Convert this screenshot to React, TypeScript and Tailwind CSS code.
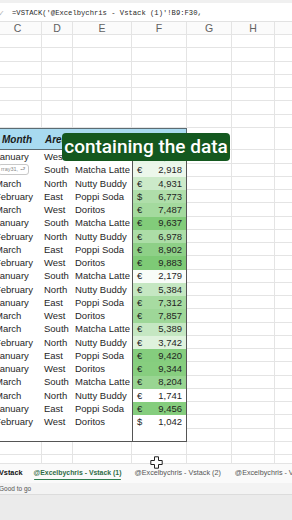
import React from 'react';

type Row = { month: string; area: string; product: string; cur: string; value: number };

const rows: Row[] = [
  { month: 'January', area: 'West', product: 'Doritos', cur: '€', value: 3105 },
  { month: 'March', area: 'South', product: 'Matcha Latte', cur: '€', value: 2918 },
  { month: 'March', area: 'North', product: 'Nutty Buddy', cur: '€', value: 4931 },
  { month: 'February', area: 'East', product: 'Poppi Soda', cur: '$', value: 6773 },
  { month: 'March', area: 'West', product: 'Doritos', cur: '€', value: 7487 },
  { month: 'January', area: 'South', product: 'Matcha Latte', cur: '€', value: 9637 },
  { month: 'February', area: 'North', product: 'Nutty Buddy', cur: '€', value: 6978 },
  { month: 'March', area: 'East', product: 'Poppi Soda', cur: '€', value: 8902 },
  { month: 'February', area: 'West', product: 'Doritos', cur: '€', value: 9883 },
  { month: 'January', area: 'South', product: 'Matcha Latte', cur: '€', value: 2179 },
  { month: 'February', area: 'North', product: 'Nutty Buddy', cur: '€', value: 5384 },
  { month: 'January', area: 'East', product: 'Poppi Soda', cur: '€', value: 7312 },
  { month: 'March', area: 'West', product: 'Doritos', cur: '€', value: 7857 },
  { month: 'March', area: 'South', product: 'Matcha Latte', cur: '€', value: 5389 },
  { month: 'February', area: 'North', product: 'Nutty Buddy', cur: '€', value: 3742 },
  { month: 'January', area: 'East', product: 'Poppi Soda', cur: '€', value: 9420 },
  { month: 'January', area: 'West', product: 'Doritos', cur: '€', value: 9344 },
  { month: 'March', area: 'South', product: 'Matcha Latte', cur: '€', value: 8204 },
  { month: 'March', area: 'North', product: 'Nutty Buddy', cur: '€', value: 1741 },
  { month: 'January', area: 'East', product: 'Poppi Soda', cur: '€', value: 9456 },
  { month: 'February', area: 'West', product: 'Doritos', cur: '$', value: 1042 },
];

// white -> green colour scale
const scale = (v: number) => {
  const t = Math.max(0, (v - 1742) / (9883 - 1742));
  const mix = (a: number, b: number) => Math.round(a + (b - a) * t);
  return `rgb(${mix(255, 126)}, ${mix(255, 202)}, ${mix(255, 118)})`;
};

const fmt = (v: number) => v.toLocaleString('en-US');

const GridTail = () => (
  <>
    <div className="w-[45px] shrink-0 border-r border-b border-[#e4e4e4]" />
    <div className="w-[43px] shrink-0 border-r border-b border-[#e4e4e4]" />
    <div className="w-[43px] shrink-0 border-r border-b border-[#e4e4e4]" />
  </>
);

const EmptyRow = ({ h = 'h-[13.25px]' }: { h?: string }) => (
  <div className={`flex ${h}`}>
    <div className="w-[48px] shrink-0 border-r border-b border-[#e4e4e4]" />
    <div className="w-[31px] shrink-0 border-r border-b border-[#e4e4e4]" />
    <div className="w-[59px] shrink-0 border-r border-b border-[#e4e4e4]" />
    <div className="w-[55px] shrink-0 border-r border-b border-[#e4e4e4]" />
    <GridTail />
  </div>
);

const Cursor = () => (
  <svg width="13" height="13" viewBox="0 0 13 13" className="block">
    <path
      d="M4.5 0.8h4v3.7h3.7v4H8.5v3.7h-4V8.5H0.8v-4h3.7z"
      fill="#ffffff"
      stroke="#222222"
      strokeWidth="1"
      strokeLinejoin="round"
    />
  </svg>
);

export default function App() {
  return (
    <div className="relative w-[292px] h-[520px] overflow-hidden bg-white font-['Liberation_Sans',Arial,sans-serif] text-[#1f1f1f] flex flex-col">
      {/* formula bar */}
      <div className="h-[22px] shrink-0 flex items-center pt-[3px] border-t-[3px] border-[#f0f0f0] border-b border-b-[#e2e2e2] bg-white">
        <span className="w-[14px] shrink-0 -ml-[2px] text-[8px] text-[#b5b5b5]">✓</span>
        <span className="font-['Liberation_Mono',monospace] text-[7.2px] text-[#2a2a2a] whitespace-nowrap">
          =VSTACK('@Excelbychris - Vstack (1)'!B9:F30,
        </span>
      </div>

      {/* sheet */}
      <div className="-ml-[6px] shrink-0">
        {/* column letters */}
        <div className="flex h-[13px] text-[10.5px] text-[#616161] bg-[#fbfbfb]">
          {[
            ['C', 'w-[48px]'],
            ['D', 'w-[31px]'],
            ['E', 'w-[59px]'],
            ['F', 'w-[55px]'],
            ['G', 'w-[45px]'],
            ['H', 'w-[43px]'],
            ['', 'w-[43px]'],
          ].map(([l, w], i) => (
            <div
              key={i}
              className={`${w} shrink-0 flex items-center justify-center pt-[1px] border-r border-b border-[#e4e4e4] leading-none`}
            >
              {l}
            </div>
          ))}
        </div>

        {Array.from({ length: 7 }).map((_, i) => (
          <EmptyRow key={i} />
        ))}

        {/* table header */}
        <div className="flex h-[22.5px]">
          <div className="w-[193px] shrink-0 flex bg-[#a8daf0] border-t border-b border-r border-[#5c6b72] text-[10px] font-bold italic text-[#1a1a1a]">
            <div className="w-[48px] shrink-0 flex items-center pl-[8px]">Month</div>
            <div className="w-[31px] shrink-0 flex items-center pl-[3px]">Area</div>
            <div className="w-[59px] shrink-0 flex items-center pl-[3px]">Product</div>
            <div className="flex-1 flex items-center pl-[4px]">Sales</div>
          </div>
          <GridTail />
        </div>

        {/* data rows */}
        {rows.map((r, i) => (
          <div key={i} className="flex h-[13.25px] text-[9.5px] leading-none">
            <div className="w-[48px] shrink-0 flex items-center pl-[1px] whitespace-nowrap overflow-hidden">{r.month}</div>
            <div className="w-[31px] shrink-0 flex items-center pl-[2px] whitespace-nowrap">{r.area}</div>
            <div className="w-[59px] shrink-0 flex items-center pl-[2px] whitespace-nowrap overflow-hidden">{r.product}</div>
            <div
              className="w-[55px] shrink-0 flex items-center justify-between px-[4px] border-x border-[#555]"
              style={{ backgroundColor: scale(r.value) }}
            >
              <span>{r.cur}</span>
              <span>{fmt(r.value)}</span>
            </div>
            <GridTail />
          </div>
        ))}

        {/* closing empty table row */}
        <div className="flex h-[13.25px]">
          <div className="w-[138px] shrink-0 border-b border-[#555]" />
          <div className="w-[55px] shrink-0 border-x border-b border-[#555]" />
          <GridTail />
        </div>

        <EmptyRow />
        <EmptyRow h="h-[9px]" />
      </div>

      {/* sheet tabs */}
      <div className="h-[19px] shrink-0 flex items-center bg-[#fafafa] whitespace-nowrap">
        <span className="font-bold text-[7.3px] text-[#111] -ml-[1px] pr-[11px]">Vstack</span>
        <span className="relative font-bold text-[6.9px] text-[#2f6b45] h-full flex items-center">
          @Excelbychris - Vstack (1)
          <span className="absolute left-0 right-0 bottom-[3px] h-[1.5px] bg-[#2f7d4f] rounded" />
        </span>
        <span className="w-px h-[9px] bg-[#d6d6d6] ml-[7px]" />
        <span className="text-[7.2px] text-[#555] px-[6px]">@Excelbychris - Vstack (2)</span>
        <span className="w-px h-[9px] bg-[#d6d6d6]" />
        <span className="text-[7.2px] text-[#555] pl-[8px]">@Excelbychris - Vstack (3)</span>
      </div>

      {/* status bar */}
      <div className="h-[12px] shrink-0 flex items-center bg-[#f3f3f3] border-b border-[#dcdcdc] text-[6.5px] text-[#555]">
        <span className="-ml-[1px]">Good to go</span>
      </div>
      <div className="flex-1 bg-[#ebebeb]" />

      {/* overlays */}
      <div className="absolute left-[62px] top-[133px] w-[168px] h-[28px] rounded-[4px] bg-[#14581f] flex items-center justify-center">
        <span className="font-['Roboto',Arial,sans-serif] font-medium text-white text-[19px] leading-none whitespace-nowrap -mt-[1px]">
          containing the data
        </span>
      </div>

      <div className="absolute left-[-2px] top-[164px] w-[31px] h-[11px] rounded-[3px] border border-[#c8c8c8] bg-white flex items-center gap-[2px] px-[2px] text-[5.5px] text-[#8a8a8a] whitespace-nowrap">
        <span>rray31,</span>
        <span>⮐</span>
      </div>

      <div className="absolute left-[150px] top-[456px]">
        <Cursor />
      </div>
    </div>
  );
}
